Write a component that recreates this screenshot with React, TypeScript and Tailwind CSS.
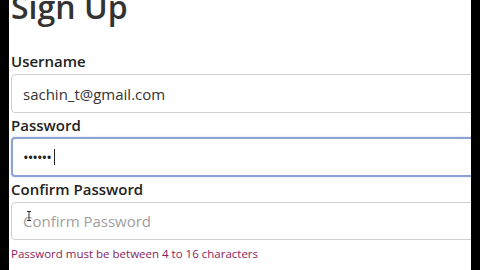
import React from 'react'

const font = { fontFamily: '"Open Sans", "Noto Sans", sans-serif' }

export default function App() {
  return (
    <div className="flex w-[480px] h-[270px] bg-white overflow-hidden" style={font}>
      <div className="w-[9px] shrink-0 bg-black" />
      <main className="relative flex-1 flex flex-col pl-[2px] overflow-hidden">
        <h1 className="-mt-[9px] h-[42px] text-[32px] leading-[32px] font-semibold text-[#333]">Sign Up</h1>

        <label className="mt-[18px] h-[20px] text-[15px] leading-[20px] font-semibold text-[#222]">Username</label>
        <input
          readOnly
          defaultValue="sachin_t@gmail.com"
          className="mt-[3px] h-[39px] w-[calc(100%+12px)] rounded-[4px] border border-[#cfcfcf] pl-[11px] text-[15px] text-[#333] outline-none"
          style={font}
        />

        <label className="mt-[2px] h-[20px] text-[15px] leading-[20px] font-semibold text-[#222]">Password</label>
        <div className="mt-[2px] h-[40px] w-[calc(100%+12px)] rounded-[4px] border-2 border-[#8aa3d0] pl-[10px] flex items-center shadow-[0_0_2px_rgba(100,130,200,0.4)]">
          <span className="text-[15px] text-[#222] tracking-[-1px]">••••••</span>
          <span className="ml-[3px] w-[1px] h-[16px] bg-[#222]" />
        </div>

        <label className="mt-[2px] h-[20px] text-[15px] leading-[20px] font-semibold text-[#222]">Confirm Password</label>
        <div className="relative mt-[3px]">
          <input
            readOnly
            placeholder="Confirm Password"
            className="h-[38px] w-[calc(100%+12px)] rounded-[4px] border border-[#cfcfcf] pl-[11px] text-[15px] text-[#333] placeholder:text-[#a0a0a0] outline-none"
            style={font}
          />
          <svg className="absolute left-[15px] top-[9px]" width="6" height="10" viewBox="0 0 6 10">
            <path d="M1 0.5h4M3 0.5v9M1 9.5h4" stroke="#333" strokeWidth="1" fill="none" />
          </svg>
        </div>

        <p className="mt-[6px] text-[11.5px] leading-[16px] text-[#8b2260]">Password must be between 4 to 16 characters</p>
      </main>
      <div className="w-[9px] shrink-0 bg-black" />
    </div>
  )
}
